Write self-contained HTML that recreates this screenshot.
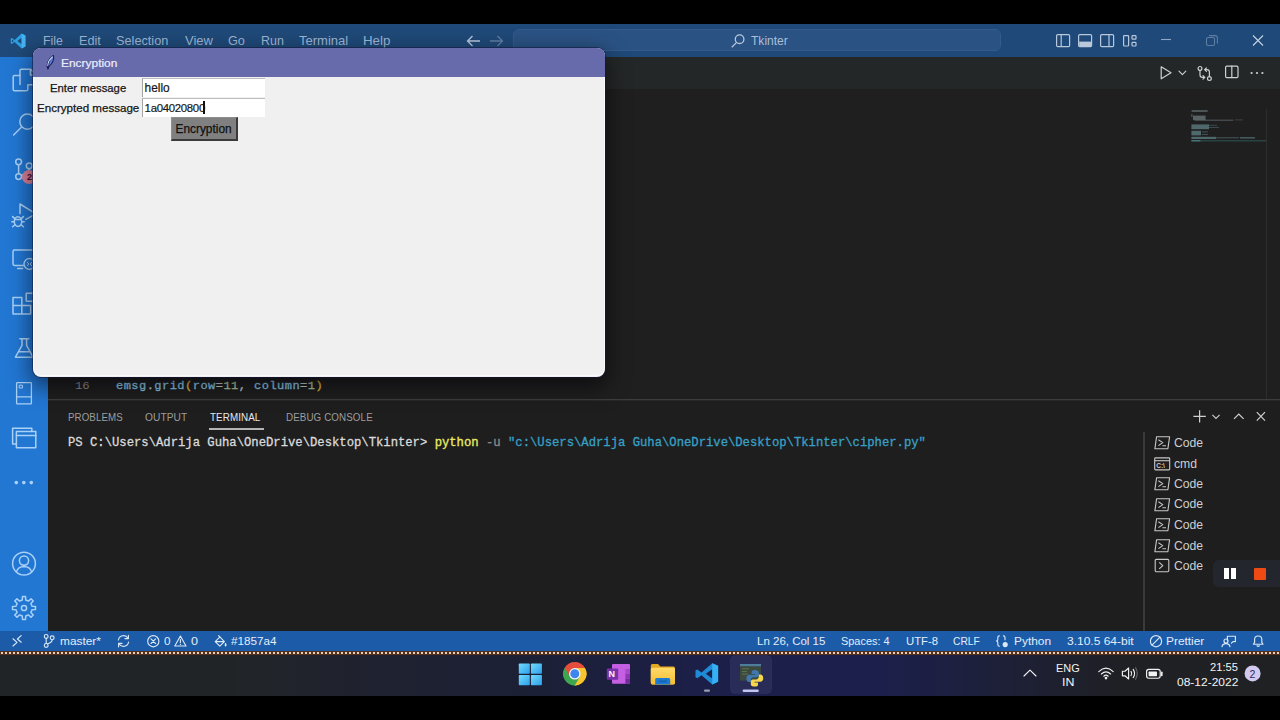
<!DOCTYPE html>
<html lang="en">
<head>
<meta charset="utf-8">
<title>Tkinter - Visual Studio Code</title>
<style>
*{box-sizing:border-box;margin:0;padding:0}
html,body{width:1280px;height:720px;overflow:hidden;background:#000}
body{position:relative;font-family:"Liberation Sans",sans-serif;color:#ccc;font-size:13px}
.abs{position:absolute}
svg{position:absolute;overflow:visible}
#titlebar{left:0;top:24px;width:1280px;height:33px;background:#1f4978}
#menu span{position:absolute;top:9px;font-size:13px;color:#9db7d6;transform-origin:0 50%;white-space:nowrap;line-height:15px}
#search{left:513px;top:5px;width:488px;height:22px;background:#2a5283;border:1px solid #335b8c;border-radius:6px}
#activity{left:0;top:57px;width:48px;height:574px;background:#2277d3}
#tabs{left:48px;top:56.5px;width:1232px;height:32.5px;background:#242728}
#editor{left:48px;top:89px;width:1232px;height:311px;background:#1f1f1f}
#panel{left:48px;top:399px;width:1232px;height:232px;background:#1e1e1e;border-top:1px solid #3d3d3d;overflow:hidden;box-shadow:inset 0 0.6px 0 #333}
#ptabs span{transform-origin:0 50%;position:absolute;top:11.4px;font-size:11px;color:#9d9d9d;white-space:nowrap;line-height:13px;letter-spacing:0.1px}
.tl{font-size:12.2px;line-height:15px;color:#cfcfcf;white-space:nowrap}
.mono{font-family:"Liberation Mono",monospace;white-space:pre}
#status{left:0;top:630.8px;width:1280px;height:20.6px;background:#1c5ba8}
#status span{position:absolute;top:3px;font-size:11.6px;color:#e3edf9;white-space:nowrap;line-height:14px;transform-origin:0 50%}
#dots{left:0;top:651.2px;width:1280px;height:3.6px;background:#54301c}
#dots i{position:absolute;left:0.7px;top:1px;width:1280px;height:1.4px;background:repeating-linear-gradient(90deg,#e8d0be 0,#e8d0be 2.2px,rgba(0,0,0,0) 2.2px,rgba(0,0,0,0) 4px)}
#taskbar{left:0;top:654.8px;width:1280px;height:41.2px;background:linear-gradient(90deg,#212426 0%,#212427 18%,#1f2230 30%,#1c2036 42%,#1c1f48 55%,#1c1f4c 68%,#1d2038 78%,#1f2024 88%,#202123 100%)}
.tt{font-size:11.4px;line-height:13px;color:#f4f4f4;white-space:nowrap;transform-origin:0 50%}
#tk{left:33px;top:48px;width:572.2px;height:328.5px;background:#f0f0f0;border-radius:8px;overflow:hidden;box-shadow:0 0 0 1px rgba(20,24,60,.55),0 8px 22px 2px rgba(0,0,8,.55)}
#tkbar{left:0;top:0;width:573px;height:28.6px;background:#676aab}
#tk .lbl{transform-origin:0 50%;position:absolute;font-size:11.4px;color:#161616;white-space:nowrap;line-height:14px;-webkit-text-stroke:0.25px #161616}
.entry{position:absolute;background:#fff;height:19.4px;width:123.3px;border-top:1px solid #bdbdbd;border-left:1px solid #a6a6a6;font-size:11.4px;color:#161616;line-height:14px;white-space:nowrap;-webkit-text-stroke:0.2px #161616}
.entry span{position:absolute;left:1.6px;top:1.6px}
#e2 i{position:absolute;left:60.4px;top:2px;width:1.7px;height:13.4px;background:#111}
#btn{left:137.6px;top:69.4px;width:67.4px;height:23.4px;background:#808080;border-top:1px solid #8e8e8e;border-left:1px solid #8e8e8e;border-right:2px solid #3a3a3a;border-bottom:2px solid #3a3a3a}
#btn span{position:absolute;left:4px;top:3.4px;font-size:11.85px;line-height:14px;color:#111;white-space:nowrap;-webkit-text-stroke:0.25px #111}
</style>
</head>
<body>
<!-- VS Code title bar -->
<div id="titlebar" class="abs">
  <div id="menu">
    <span id="m1" style="left:43.1px;transform:scaleX(0.947)">File</span>
    <span id="m2" style="left:78.6px;transform:scaleX(0.976)">Edit</span>
    <span id="m3" style="left:116.1px;transform:scaleX(0.979)">Selection</span>
    <span id="m4" style="left:184.6px;transform:scaleX(0.998)">View</span>
    <span id="m5" style="left:227.6px;transform:scaleX(0.973)">Go</span>
    <span id="m6" style="left:260.6px;transform:scaleX(0.958)">Run</span>
    <span id="m7" style="left:298.5px;transform:scaleX(1.001)">Terminal</span>
    <span id="m8" style="left:363.3px;transform:scaleX(1.025)">Help</span>
  </div>
  <div id="search" class="abs"></div>
  <span class="abs" id="mt" style="left:750.6px;top:9px;font-size:13px;line-height:15px;color:#a9bfd9;transform-origin:0 50%;transform:scaleX(0.927)">Tkinter</span>
  <!-- vscode logo -->
  <svg style="left:10px;top:9px" width="16" height="16" viewBox="0 0 16 16">
    <path d="M11.6 0.6 L15.4 2.4 V13.6 L11.6 15.4 L4.6 9 L1.9 11.1 L0.7 10.4 V5.6 L1.9 4.9 L4.6 7 Z M11.6 4.8 L7.4 8 L11.6 11.2 Z M1.9 6.4 V9.6 L3.6 8 Z" fill="#2c9fe4" fill-rule="evenodd"/>
    <path d="M11.6 0.6 L15.4 2.4 V13.6 L11.6 15.4 Z" fill="#47b3f2"/>
  </svg>
  <!-- nav arrows -->
  <svg style="left:466px;top:11px" width="40" height="12" viewBox="0 0 40 12" fill="none" stroke-width="1.3">
    <path d="M14 6 H1.5 M6.5 1 L1.5 6 L6.5 11" stroke="#b9c8db"/>
    <path d="M24 6 H36.5 M31.5 1 L36.5 6 L31.5 11" stroke="#5f7da3"/>
  </svg>
  <!-- search icon -->
  <svg style="left:731px;top:10px" width="14" height="14" viewBox="0 0 14 14" fill="none" stroke="#b9c8db" stroke-width="1.3">
    <circle cx="8.6" cy="5.2" r="4.3"/><path d="M5.6 8.4 L0.8 13.2"/>
  </svg>
  <!-- layout icons -->
  <svg style="left:1056px;top:10px" width="82" height="14" viewBox="0 0 82 14" fill="none" stroke="#b9c8db" stroke-width="1.2">
    <rect x="0.6" y="0.6" width="13" height="12" rx="1.2"/><path d="M5.2 0.6 V12.6"/>
    <rect x="22.6" y="0.6" width="13" height="12" rx="1.2"/><rect x="23.2" y="7.6" width="11.8" height="4.4" fill="#b9c8db" stroke="none"/>
    <rect x="44.6" y="0.6" width="13" height="12" rx="1.2"/><path d="M53 0.6 V12.6"/>
    <rect x="67.6" y="1.6" width="5" height="10.4" rx="0.8"/><rect x="76" y="1.6" width="4" height="3.6" rx="0.8"/><rect x="76" y="8.4" width="4" height="3.6" rx="0.8"/>
  </svg>
  <!-- window controls -->
  <svg style="left:1161px;top:11px" width="104" height="12" viewBox="0 0 104 12" fill="none" stroke-width="1.1">
    <path d="M0 4.5 H10" stroke="#8fa7c4"/>
    <rect x="45.5" y="2.5" width="8" height="8" rx="1.5" stroke="#5f7da3"/><path d="M48 0.6 H54 Q56.4 0.6 56.4 3 V8.5" stroke="#5f7da3"/>
    <path d="M92 0.5 L102 10.5 M102 0.5 L92 10.5" stroke="#c5d2e3"/>
  </svg>
</div>

<!-- activity bar -->
<div id="activity" class="abs">
  <svg style="left:0;top:0" width="48" height="574" viewBox="0 0 48 574" fill="none" stroke="#a9d1f7" stroke-width="1.5" stroke-linejoin="round" stroke-linecap="round">
    <!-- files -->
    <path d="M20 27.6 V13.6 Q20 12.2 21.4 12.2 H30.6 L36 17.6 V26.4 Q36 27.8 34.6 27.8 H28.6 M30.4 12.4 V18 H35.8"/>
    <path d="M20 18.6 H14.6 Q13.2 18.6 13.2 20 V32.4 Q13.2 33.8 14.6 33.8 H26.4 Q27.8 33.8 27.8 32.4 V27.8"/>
    <!-- search -->
    <circle cx="27.4" cy="64.6" r="7.6"/><path d="M21.6 70 L13.6 78"/>
    <!-- source control -->
    <circle cx="18.6" cy="104.8" r="2.9"/><circle cx="18.6" cy="119.6" r="2.9"/><circle cx="29.2" cy="108.8" r="2.9"/>
    <path d="M18.6 107.8 V116.6 M29.2 111.8 Q29 116.4 21.6 118.2"/>
    <!-- debug -->
    <path d="M20 156.4 V147 L36 156.8 L25.8 162.4"/>
    <ellipse cx="18" cy="164.6" rx="3.7" ry="4.8"/>
    <path d="M14.6 162.6 H21.4 M14.3 164.8 H11.8 M21.7 164.8 H24.2 M14.8 161.6 L12.6 159.6 M21.2 161.6 L23.4 159.6 M14.9 167.8 L12.6 169.8 M21.1 167.8 L23.4 169.8"/>
    <!-- remote explorer -->
    <path d="M24 208.4 H14.4 Q13 208.4 13 207 V194.4 Q13 193 14.4 193 H34.6 Q36 193 36 194.4 V200 M17.6 211.4 H22.6"/>
    <circle cx="29.4" cy="207" r="5.4"/>
    <path d="M27.4 205.4 L28.8 207 L27.4 208.6 M31.6 205.4 L30.2 207 L31.6 208.6" stroke-width="1"/>
    <!-- extensions -->
    <path d="M13 240.6 H21.8 V248.6 H30.6 V257 H13 Z M21.8 248.6 V257 M13 248.6 H21.8"/>
    <rect x="26.2" y="236.2" width="8.8" height="8" rx="0.6"/>
    <!-- flask -->
    <path d="M19.8 281.8 H28.8 M22 282 V288.4 L15.4 300.2 H33 L26.6 288.4 V282 M18.6 294.8 H30"/>
    <!-- box -->
    <rect x="16.6" y="325.6" width="14.8" height="21.2" rx="0.6" stroke-width="1.3"/><path d="M16.6 339.8 H31.4" stroke-width="1.3"/><rect x="19.6" y="328.2" width="2.8" height="2.8" stroke-width="1"/>
    <!-- windows -->
    <path d="M16.4 387 H12.6 V371.2 H31.8 V374.4" />
    <rect x="16.4" y="374.4" width="19.4" height="16.4"/><path d="M16.4 378.6 H35.8"/>
    <!-- dots -->
    <g fill="#a9d1f7" stroke="none"><circle cx="16.3" cy="425.6" r="1.8"/><circle cx="23.8" cy="425.6" r="1.8"/><circle cx="31.3" cy="425.6" r="1.8"/></g>
    <!-- account -->
    <circle cx="24" cy="506.6" r="11.4"/><circle cx="24" cy="503.6" r="4.6"/><path d="M16.4 514.8 Q18 509.6 24 509.4 Q30 509.6 31.6 514.8"/>
    <!-- gear -->
    <path d="M22.27 542.98 L22.46 539.50 L25.54 539.50 L25.73 542.98 L28.45 544.11 L31.04 541.78 L33.22 543.96 L30.89 546.55 L32.02 549.27 L35.50 549.46 L35.50 552.54 L32.02 552.73 L30.89 555.45 L33.22 558.04 L31.04 560.22 L28.45 557.89 L25.73 559.02 L25.54 562.50 L22.46 562.50 L22.27 559.02 L19.55 557.89 L16.96 560.22 L14.78 558.04 L17.11 555.45 L15.98 552.73 L12.50 552.54 L12.50 549.46 L15.98 549.27 L17.11 546.55 L14.78 543.96 L16.96 541.78 L19.55 544.11 Z"/><circle cx="24" cy="551" r="2.6"/>
  </svg>
  <div class="abs" style="left:22.4px;top:112.6px;width:14px;height:14px;border-radius:7px;background:#dc8199;color:#3a1030;font-size:9px;line-height:14px;text-align:center;font-weight:bold">2</div>
</div>

<!-- editor -->
<div id="tabs" class="abs">
  <svg style="left:1112px;top:8.4px" width="106" height="17" viewBox="0 0 106 17" fill="none" stroke="#d0d0d0" stroke-width="1.2" stroke-linejoin="round" stroke-linecap="round">
    <!-- run -->
    <path d="M1.2 1.8 V13.8 L11 7.8 Z"/>
    <!-- chevron -->
    <path d="M19 6.2 L22.4 9.6 L25.8 6.2" stroke-width="1.1"/>
    <!-- compare changes -->
    <circle cx="40" cy="3.4" r="1.9"/><circle cx="49.4" cy="13.6" r="1.9"/>
    <path d="M40 5.4 V10 Q40 12.4 42.4 12.4 H44.6 M43 10.6 L44.8 12.4 L43 14.2"/>
    <path d="M49.4 11.6 V7 Q49.4 4.6 47 4.6 H44.8 M46.4 2.8 L44.6 4.6 L46.4 6.4"/>
    <!-- split -->
    <rect x="65.6" y="1.2" width="12.4" height="11.4" rx="1.2"/><path d="M71.8 1.2 V12.6"/>
    <!-- dots -->
    <g fill="#d0d0d0" stroke="none"><circle cx="91.6" cy="8" r="1.1"/><circle cx="97" cy="8" r="1.1"/><circle cx="102.4" cy="8" r="1.1"/></g>
  </svg>
</div>
<div id="editor" class="abs">
  <!-- minimap -->
  <svg style="left:1143px;top:20px" width="80" height="36" viewBox="0 0 80 36" stroke="none">
    <g fill="#8a9a9c" opacity="0.55">
      <rect x="0.6" y="1.2" width="16" height="1.6"/>
      <rect x="0.4" y="5" width="1" height="3"/>
      <rect x="2" y="6.6" width="12.6" height="4.4"/>
      <rect x="3.4" y="10.6" width="39" height="1.3" opacity="0.7"/>
      <rect x="44" y="10.4" width="8" height="1" opacity="0.5"/>
    </g>
    <g fill="#6f9aa0" opacity="0.6">
      <rect x="0.4" y="15.4" width="17.6" height="4.8"/>
      <rect x="18" y="15.8" width="8" height="1" opacity="0.6"/>
      <rect x="18" y="18" width="10" height="1" opacity="0.6"/>
      <rect x="0.4" y="21.8" width="9.6" height="4.6"/>
      <rect x="11" y="22.4" width="6" height="1" opacity="0.7"/>
      <rect x="11" y="25" width="6" height="1" opacity="0.7"/>
      <rect x="0.4" y="27.8" width="25" height="2.2"/>
      <rect x="26" y="28" width="22" height="1.4" opacity="0.55"/>
      <rect x="49" y="28" width="15" height="1.6" opacity="0.8"/>
    </g>
    <rect x="0.4" y="31.4" width="75" height="0.9" fill="#2f6a6c" opacity="0.8"/>
    <rect x="0.4" y="31.2" width="9" height="1.2" fill="#5f9a9c" opacity="0.7"/>
  </svg>
  <div class="abs" style="left:1218px;top:20px;width:1px;height:291px;background:#2e2e2e"></div>
  <span class="abs mono" style="left:26.6px;top:290px;font-size:10.2px;line-height:15px;color:#929292;transform:scaleX(1.2);transform-origin:0 50%">16</span>
  <span class="abs mono" id="code16" style="left:68px;top:289.8px;font-size:12px;letter-spacing:0.467px;line-height:15px;color:#8fd0f0;-webkit-text-stroke:0.3px;transform:scaleY(0.93);transform-origin:0 10.7px">emsg<span style="color:#d4d4d4">.</span>grid<span style="color:#e8c038">(</span>row<span style="color:#d4d4d4">=</span><span style="color:#b5cea8">11</span><span style="color:#d4d4d4">, </span>column<span style="color:#d4d4d4">=</span><span style="color:#b5cea8">1</span><span style="color:#e8c038">)</span></span>
</div>

<!-- panel -->
<div id="panel" class="abs">
  <div id="ptabs">
    <span id="p1" style="left:19.6px;transform:scaleX(0.885)">PROBLEMS</span>
    <span id="p2" style="left:97.1px;transform:scaleX(0.924)">OUTPUT</span>
    <span id="p3" style="left:162.1px;color:#e7e7e7;transform:scaleX(0.892)">TERMINAL</span>
    <span id="p4" style="left:237.6px;transform:scaleX(0.892)">DEBUG CONSOLE</span>
  </div>
  <div class="abs" style="left:161px;top:28.4px;width:55.4px;height:1.3px;background:#b4b4b4"></div>
  <span class="abs mono" id="term" style="left:20px;top:36.3px;font-size:12.22px;line-height:15px;color:#dadada;-webkit-text-stroke:0.3px">PS C:\Users\Adrija Guha\OneDrive\Desktop\Tkinter&gt; <span style="color:#ecec62">python</span> <span style="color:#8a8a8a">-u</span> <span style="color:#38a0c6">"c:\Users\Adrija Guha\OneDrive\Desktop\Tkinter\cipher.py"</span></span>
  <div class="abs" style="left:1095.2px;top:32px;width:1.4px;height:200px;background:#3a3a3a"></div>
  <!-- panel actions -->
  <svg style="left:1145px;top:10px" width="74" height="13" viewBox="0 0 74 13" fill="none" stroke="#d0d0d0" stroke-width="1.2">
    <path d="M0.4 6.4 H12.8 M6.6 0.2 V12.6"/>
    <path d="M19.4 4.8 L23 8.4 L26.6 4.8" stroke-width="1.1"/>
    <path d="M41 8.8 L45.8 4 L50.6 8.8"/>
    <path d="M63.8 2.2 L72 10.6 M72 2.2 L63.8 10.6"/>
  </svg>
  <svg style="left:1106px;top:36.4px" width="17" height="14" viewBox="0 0 17 14" fill="none" stroke="#c8c8c8" stroke-width="1.1" stroke-linejoin="round"><path d="M2.6 0.7 H15.6 L13.9 12.7 H0.9 Z M4.4 3.8 L8.8 6.6 L4.4 9.6 M8.4 9.7 H12"/></svg>
  <span class="abs tl" style="left:1126px;top:35.9px">Code</span>
  <svg style="left:1106px;top:57.0px" width="17" height="14" viewBox="0 0 17 14" fill="none" stroke="#c8c8c8" stroke-width="1.1" stroke-linejoin="round"><rect x="0.7" y="0.9" width="15" height="12" rx="0.8"/><path d="M0.7 3.7 H15.7"/><text x="2.2" y="11" font-family="Liberation Sans, sans-serif" font-size="6.5" font-weight="bold" fill="#c8c8c8" stroke="none">C:\</text></svg>
  <span class="abs tl" style="left:1126px;top:56.5px">cmd</span>
  <svg style="left:1106px;top:77.4px" width="17" height="14" viewBox="0 0 17 14" fill="none" stroke="#c8c8c8" stroke-width="1.1" stroke-linejoin="round"><path d="M2.6 0.7 H15.6 L13.9 12.7 H0.9 Z M4.4 3.8 L8.8 6.6 L4.4 9.6 M8.4 9.7 H12"/></svg>
  <span class="abs tl" style="left:1126px;top:76.9px">Code</span>
  <svg style="left:1106px;top:97.9px" width="17" height="14" viewBox="0 0 17 14" fill="none" stroke="#c8c8c8" stroke-width="1.1" stroke-linejoin="round"><path d="M2.6 0.7 H15.6 L13.9 12.7 H0.9 Z M4.4 3.8 L8.8 6.6 L4.4 9.6 M8.4 9.7 H12"/></svg>
  <span class="abs tl" style="left:1126px;top:97.4px">Code</span>
  <svg style="left:1106px;top:118.4px" width="17" height="14" viewBox="0 0 17 14" fill="none" stroke="#c8c8c8" stroke-width="1.1" stroke-linejoin="round"><path d="M2.6 0.7 H15.6 L13.9 12.7 H0.9 Z M4.4 3.8 L8.8 6.6 L4.4 9.6 M8.4 9.7 H12"/></svg>
  <span class="abs tl" style="left:1126px;top:117.9px">Code</span>
  <svg style="left:1106px;top:139.0px" width="17" height="14" viewBox="0 0 17 14" fill="none" stroke="#c8c8c8" stroke-width="1.1" stroke-linejoin="round"><path d="M2.6 0.7 H15.6 L13.9 12.7 H0.9 Z M4.4 3.8 L8.8 6.6 L4.4 9.6 M8.4 9.7 H12"/></svg>
  <span class="abs tl" style="left:1126px;top:138.5px">Code</span>
  <svg style="left:1106px;top:159.4px" width="17" height="14" viewBox="0 0 17 14" fill="none" stroke="#c8c8c8" stroke-width="1.1" stroke-linejoin="round"><rect x="1.2" y="0.4" width="13.6" height="12.4" rx="1.2"/><path d="M5.2 3.4 L8.8 6.6 L5.2 9.8"/></svg>
  <span class="abs tl" style="left:1126px;top:158.9px">Code</span>
  <!-- recorder widget -->
  <div class="abs" style="left:1165px;top:160.4px;width:80px;height:26.6px;border-radius:6px;background:#23262d"></div>
  <div class="abs" style="left:1176px;top:168.2px;width:4.8px;height:11.2px;background:#fff"></div>
  <div class="abs" style="left:1183.4px;top:168.2px;width:4.9px;height:11.2px;background:#fff"></div>
  <div class="abs" style="left:1205.8px;top:168.2px;width:12.6px;height:11.4px;background:#f04a14;border-radius:1px"></div>
</div>

<!-- status bar -->
<div id="status" class="abs">
  <svg style="left:0;top:0" width="1280" height="20" viewBox="0 0 1280 20" fill="none" stroke="#dbe8f7" stroke-width="1.15" stroke-linecap="round" stroke-linejoin="round">
    <!-- remote -->
    <path d="M13 7.8 L17 11.4 L13 15 M21.2 4.6 L17.4 8 L21.2 11.2"/>
    <!-- branch -->
    <circle cx="46.2" cy="5.4" r="1.9"/><circle cx="46.2" cy="14.4" r="1.9"/><circle cx="52.2" cy="6.8" r="1.9"/>
    <path d="M46.2 7.4 V12.4 M52.2 8.8 Q52 11.6 47.8 12.8"/>
    <!-- sync -->
    <path d="M118.4 9 A5.2 5.2 0 0 1 128 7.2 M128.6 11 A5.2 5.2 0 0 1 119 12.8"/>
    <path d="M128.4 4.2 V7.6 H125 M118.6 15.8 V12.4 H122" />
    <!-- error -->
    <circle cx="153.3" cy="10.2" r="5.6"/><path d="M151 7.9 L155.6 12.5 M155.6 7.9 L151 12.5"/>
    <!-- warning -->
    <path d="M180.4 5 L186 15 H174.8 Z M180.4 8.6 V11.6 M180.4 13.2 V13.4"/>
    <!-- paint bucket -->
    <path d="M218.6 4.6 L224.4 10.6 L219.8 15.2 L215.2 10.6 L220 5.8 M215.6 10.6 H224 M225.6 12.6 Q224.6 14.4 225.6 15 Q226.6 14.4 225.6 12.6"/>
    <!-- braces python -->
    <path d="M999.4 4.8 Q997.8 4.8 997.8 6.4 V8.6 Q997.8 9.9 996.4 10 Q997.8 10.1 997.8 11.4 V13.6 Q997.8 15.2 999.4 15.2 M1003.4 4.8 Q1005 4.8 1005 6.4 V8.8"/>
    <circle cx="1005.2" cy="13.6" r="2" fill="#dbe8f7"/>
    <!-- prettier no -->
    <circle cx="1156" cy="10.2" r="5.6"/><path d="M1152 14.2 L1160 6.2"/>
    <!-- feedback -->
    <path d="M1227.4 9.4 V5.2 H1235.4 V10.6 H1233 L1231.4 12.2"/>
    <circle cx="1226" cy="10" r="2"/><path d="M1222 15.6 Q1222.4 12.6 1226 12.6 Q1229.6 12.6 1230 15.6"/>
    <!-- bell -->
    <path d="M1253.4 13.2 H1263 L1261.8 11.4 V8.4 Q1261.8 5 1258.2 5 Q1254.6 5 1254.6 8.4 V11.4 Z M1257 14.8 Q1258.2 15.8 1259.4 14.8"/>
  </svg>
  <span id="s1" style="left:59.5px;transform:scaleX(1.024)">master*</span>
  <span id="s2" style="left:163.9px;transform:scaleX(1.008)">0</span>
  <span id="s3" style="left:190.5px;transform:scaleX(1.080)">0</span>
  <span id="s4" style="left:230.5px;transform:scaleX(1.008)">#1857a4</span>
  <span id="s5" style="left:756.9px;transform:scaleX(0.992)">Ln 26, Col 15</span>
  <span id="s6" style="left:841.3px;transform:scaleX(0.942)">Spaces: 4</span>
  <span id="s7" style="left:906.3px;transform:scaleX(0.976)">UTF-8</span>
  <span id="s8" style="left:953.1px;transform:scaleX(0.885)">CRLF</span>
  <span id="s9" style="left:1014.0px;transform:scaleX(1.028)">Python</span>
  <span id="s10" style="left:1066.5px;transform:scaleX(1.034)">3.10.5 64-bit</span>
  <span id="s11" style="left:1166.2px;transform:scaleX(1.025)">Prettier</span>
</div>
<div id="dots" class="abs"><i></i></div>

<!-- taskbar -->
<div id="taskbar" class="abs"><div class="abs" style="left:0;top:-0.4px;width:1280px;height:42px">
  <!-- active app tile -->
  <div class="abs" style="left:730.6px;top:1.4px;width:40px;height:37.4px;border-radius:4px;background:#282c56;box-shadow:0 0 0 0.6px #34386a"></div>
  <svg style="left:0;top:0" width="1280" height="42" viewBox="0 0 1280 42">
    <defs>
      <linearGradient id="wg" x1="0" y1="0" x2="1" y2="1"><stop offset="0" stop-color="#74dcfa"/><stop offset="1" stop-color="#2b9fee"/></linearGradient>
      <linearGradient id="fg" x1="0" y1="0" x2="0" y2="1"><stop offset="0" stop-color="#ffd968"/><stop offset="1" stop-color="#f5bd32"/></linearGradient>
    </defs>
    <!-- windows logo -->
    <g fill="url(#wg)">
      <rect x="518.8" y="9.4" width="11" height="10.4" rx="0.8"/><rect x="530.9" y="9.4" width="11" height="10.4" rx="0.8"/>
      <rect x="518.8" y="20.9" width="11" height="10.4" rx="0.8"/><rect x="530.9" y="20.9" width="11" height="10.4" rx="0.8"/>
    </g>
    <!-- chrome -->
    <g transform="translate(574.8 19.8)">
      <circle r="12" fill="#2a3a2a" opacity="0.5"/>
      <path d="M0 0 L-10.05 -5.8 A11.6 11.6 0 0 1 10.05 -5.8 Z" fill="#e74c3c"/>
      <path d="M0 0 L10.05 -5.8 A11.6 11.6 0 0 1 0 11.6 Z" fill="#f7c52e"/>
      <path d="M0 0 L0 11.6 A11.6 11.6 0 0 1 -10.05 -5.8 Z" fill="#3fa650"/>
      <path d="M0 -5.8 H10.05 A11.6 11.6 0 0 0 -10.05 -5.8 L-5 2.9 Z" fill="#e74c3c"/>
      <path d="M5 2.9 L0 11.6 A11.6 11.6 0 0 0 10.05 -5.8 H0 Z" fill="#f7c52e"/>
      <path d="M-5 2.9 L-10.05 -5.8 A11.6 11.6 0 0 0 0 11.6 L5 2.9 Z" fill="#3fa650"/>
      <circle r="5.8" fill="#f4f6fa"/><circle r="4.5" fill="#3d84ee"/>
    </g>
    <!-- onenote -->
    <rect x="612" y="10" width="18" height="19.8" rx="1" fill="#c45fe2"/>
    <rect x="625.4" y="14.8" width="4.6" height="5" fill="#a848cc"/><rect x="625.4" y="19.8" width="4.6" height="5" fill="#8c38b4"/><rect x="625.4" y="24.8" width="4.6" height="5" fill="#742c9c"/>
    <rect x="606.8" y="14.4" width="11.4" height="11.4" rx="1" fill="#7a30aa"/>
    <!-- explorer -->
    <path d="M650.8 11.6 Q650.8 10 652.4 10 H658 L660.4 12.4 H673.4 Q675 12.4 675 14 V28.8 Q675 30.4 673.4 30.4 H652.4 Q650.8 30.4 650.8 28.8 Z" fill="#e3a822"/>
    <path d="M650.8 15.4 Q650.8 13.8 652.4 13.8 H673.4 Q675 13.8 675 15.4 V28.8 Q675 30.4 673.4 30.4 H652.4 Q650.8 30.4 650.8 28.8 Z" fill="url(#fg)"/>
    <path d="M655.2 30.4 V25.6 Q655.2 24 656.8 24 H668.6 Q670.2 24 670.2 25.6 V30.4 Z" fill="#1b7ad4"/>
    <rect x="658.6" y="26.6" width="8.4" height="1.6" rx="0.8" fill="#1562b0"/>
    <!-- vscode -->
    <g transform="translate(694.4 8.4) scale(1.54 1.43)">
      <path d="M11.6 0.6 L15.4 2.4 V13.6 L11.6 15.4 L4.6 9 L1.9 11.1 L0.7 10.4 V5.6 L1.9 4.9 L4.6 7 Z M11.6 4.8 L7.4 8 L11.6 11.2 Z" fill="#1f8ad6" fill-rule="evenodd"/>
      <path d="M11.6 0.6 L15.4 2.4 V13.6 L11.6 15.4 Z" fill="#35b0f4"/>
    </g>
    <rect x="704" y="35.6" width="6" height="2.2" rx="1.1" fill="#9a9cb2"/>
    <!-- python window -->
    <rect x="740" y="10" width="21" height="16.6" fill="#3b493f"/><rect x="740" y="10" width="21" height="2.2" fill="#4c7e9c"/>
    <rect x="742" y="14.4" width="7" height="0.9" fill="#6f8a5a" opacity=".7"/><rect x="742" y="17" width="5" height="0.9" fill="#6f8a5a" opacity=".7"/><rect x="742" y="19.6" width="6" height="0.9" fill="#6f8a5a" opacity=".7"/>
    <g transform="translate(746.4 16)">
      <path d="M8.4 0 C5.6 0 5.2 1.2 5.2 2.4 V4 H8.6 V4.8 H3 C1.2 4.8 0 6.2 0 8.4 C0 10.8 1.2 12 2.8 12 H4.4 V9.8 C4.4 8.4 5.6 7.2 7 7.2 H10.4 C11.6 7.2 12.4 6.2 12.4 5.2 V2.4 C12.4 1 11 0 8.4 0 Z" fill="#3f78b0"/>
      <path d="M8.4 16.6 C11.2 16.6 11.6 15.4 11.6 14.2 V12.6 H8.2 V11.8 H13.8 C15.6 11.8 16.8 10.4 16.8 8.2 C16.8 5.8 15.6 4.6 14 4.6 H12.4 V6.8 C12.4 8.2 11.2 9.4 9.8 9.4 H6.4 C5.2 9.4 4.4 10.4 4.4 11.4 V14.2 C4.4 15.6 5.8 16.6 8.4 16.6 Z" fill="#f6d64c"/>
    </g>
    <rect x="742.6" y="35.6" width="16.2" height="2.4" rx="1.2" fill="#c4c4f2"/>
    <!-- tray -->
    <g fill="none" stroke="#f2f2f2" stroke-width="1.15" stroke-linecap="round" stroke-linejoin="round">
      <path d="M1024 22 L1030 16.2 L1036 22"/>
      <!-- wifi -->
      <path d="M1098.8 17.6 Q1106 10.6 1113.2 17.6 M1101.4 20 Q1106 15.6 1110.6 20 M1103.8 22.2 Q1106 20.2 1108.2 22.2"/>
      <circle cx="1106" cy="24" r="0.8" fill="#f2f2f2"/>
      <!-- volume -->
      <path d="M1122.4 17.2 H1125 L1128.6 14 V25 L1125 21.8 H1122.4 Z M1131 17.4 Q1132.6 19.5 1131 21.6 M1133.2 15.4 Q1136 19.5 1133.2 23.6"/>
      <path d="M1135.6 13.8 Q1139 19.5 1135.6 25.2" opacity="0.35"/>
      <!-- battery -->
      <rect x="1146.6" y="15.4" width="13.6" height="8.8" rx="2.2"/><path d="M1161.8 18.2 V21.4" stroke-width="1.6"/>
      <rect x="1148.6" y="17.4" width="8.4" height="4.8" rx="0.8" fill="#f2f2f2" stroke="none"/>
    </g>
    <circle cx="1252.6" cy="19.4" r="8" fill="#d2caee"/>
  </svg>
  <span id="t0" class="abs tt" style="left:608.6px;top:14.6px;font-size:9px;font-weight:bold;line-height:11px">N</span>
  <span id="t1" class="abs tt" style="left:1056.4px;top:7.6px;transform:scaleX(0.958)">ENG</span>
  <span id="t2" class="abs tt" style="left:1061.8px;top:21.4px;transform:scaleX(1.085)">IN</span>
  <span id="t3" class="abs tt" style="left:1210.0px;top:7px;transform:scaleX(0.978)">21:55</span>
  <span id="t4" class="abs tt" style="left:1176.5px;top:21.2px;transform:scaleX(1.053)">08-12-2022</span>
  <span id="t5" class="abs tt" style="left:1249.6px;top:13.2px;font-size:10.5px;color:#2a2c5c">2</span>
</div></div>

<!-- Tk window -->
<div id="tk" class="abs">
  <div id="tkbar" class="abs"></div>
  <div class="abs" style="left:0;top:28.6px;width:572.2px;height:299.9px;border:1px solid rgba(252,252,255,.75);border-top:none;border-radius:0 0 8px 8px"></div>
  <!-- feather -->
  <svg style="left:12px;top:7px" width="10" height="15" viewBox="0 0 10 15">
    <path d="M2.9 14 C1.2 9.6 2.8 4 8.4 0.5 C9.5 3.6 7.6 8.8 4 11.4 Z" fill="#5f7fd0" stroke="#161a56" stroke-width="1.1" stroke-linejoin="round"/>
    <path d="M2.9 10.6 C3 7.4 4.6 4.2 7.4 1.9" fill="none" stroke="#c8dcf8" stroke-width="1.2" stroke-linecap="round"/>
    <path d="M5.2 5.6 C4.2 7.8 3.6 10 3 13.6" fill="none" stroke="#161a56" stroke-width="0.7"/>
  </svg>
  <span class="abs" id="tktitle" style="-webkit-text-stroke:0.2px;transform-origin:0 50%;left:28.2px;top:8px;font-size:11.75px;line-height:14px;color:#eceefa;transform:scaleX(1.016)">Encryption</span>
  <span class="lbl" id="l1" style="left:17.0px;top:33px;font-size:11.2px;transform:scaleX(1.013)">Enter message</span>
  <span class="lbl" id="l2" style="left:4.1px;top:53px;font-size:11.48px;transform:scaleX(1.009)">Encrypted message</span>
  <div class="entry" id="e1" style="left:109px;top:30px"><span style="font-size:11.85px">hello</span></div>
  <div class="entry" id="e2" style="left:109px;top:50px"><span style="letter-spacing:-0.3px">1a04020800</span><i></i></div>
  <div id="btn" class="abs"><span>Encryption</span></div>
</div>
</body>
</html>
